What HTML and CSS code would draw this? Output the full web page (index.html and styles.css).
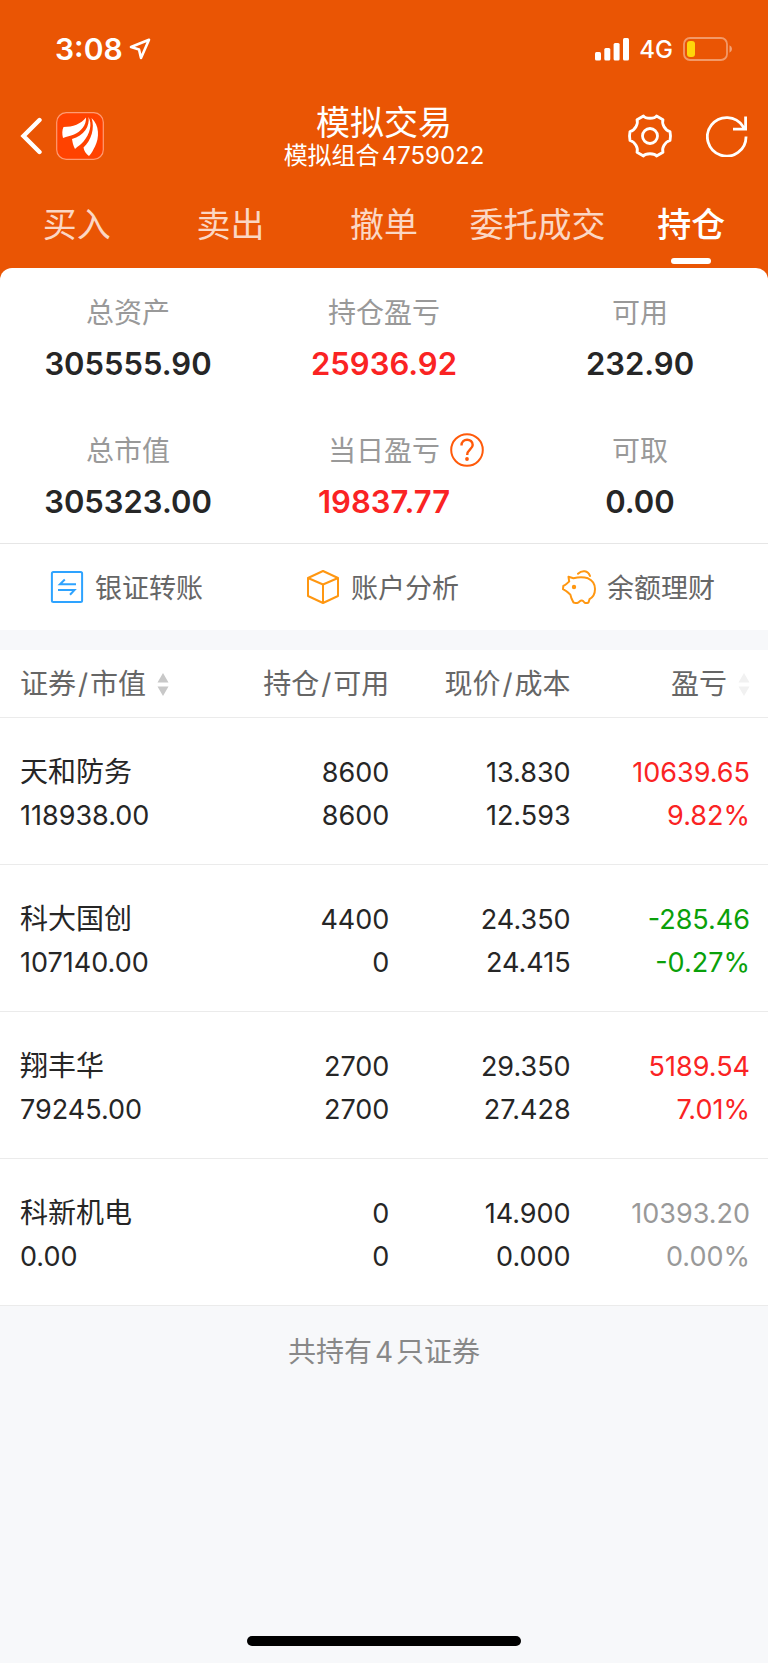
FILE: index.html
```html
<!DOCTYPE html>
<html lang="zh-CN">
<head>
<meta charset="utf-8">
<meta name="viewport" content="width=device-width, initial-scale=1">
<title>模拟交易</title>
<link rel="stylesheet" href="styles.css">
</head>
<body>
<div class="app">
  <header class="top">
    <div class="status">
      <div class="status-left">
        <span class="time">3:08</span>
        <svg width="22" height="22" viewBox="0 0 22 22" fill="none" stroke="#fff" stroke-width="2.600" stroke-linejoin="round"><path d="M20 1.800 2 9 10 11.500 12 20Z"/></svg>
      </div>
      <div class="status-right">
        <svg width="34" height="23" viewBox="0 0 34 23" fill="#fff"><rect x="0" y="14" width="6" height="8.500" rx="1.500"/><rect x="9.300" y="10" width="6" height="12.500" rx="1.500"/><rect x="18.600" y="5" width="6" height="17.500" rx="1.500"/><rect x="28" y="0" width="6" height="22.500" rx="1.500"/></svg>
        <span class="network">4G</span>
        <svg width="50" height="24" viewBox="0 0 50 24"><rect x="1" y="1" width="43" height="22" rx="6" fill="none" stroke="#fff" stroke-opacity=".4" stroke-width="1.800"/><rect x="4" y="4" width="8" height="16" rx="3" fill="#ffd60a"/><path d="M46.500 8.200q2.500 1.300 2.500 3.800t-2.500 3.800z" fill="#fff" fill-opacity=".45"/></svg>
      </div>
    </div>
    <div class="bar">
      <div class="bar-side">
        <button class="icon-btn" aria-label="返回"><svg width="22" height="38" viewBox="0 0 22 38" fill="none" stroke="#fff" stroke-width="4.400"><path d="M19.500 3 3.500 19 19.500 35" stroke-linecap="round"/></svg></button>
        <svg class="logo" width="48" height="48" viewBox="0 0 48 48"><rect x=".7" y=".7" width="46.600" height="46.600" rx="9.500" fill="#ff4200" stroke="#ff9b73" stroke-width="1.200"/><path fill="#fff" d="M30 5.500C25 12 17 15 7.500 15 6 18 6 22 7 26 11 24 14 24.500 18 22.500 25 19.500 30.500 13 30 5.500ZM32.500 5C34 14 28 24 16 27 16.500 30 17 33 19 37 22 34 24.500 33 27.500 29.500 34 22 36.500 12 32.500 5ZM35.500 6C39 16 35.500 28 27.500 35.500 28 39 30 42 33 44 36 41 37 38 39 34.500 43.500 26 43.500 13 35.500 6Z"/></svg>
      </div>
      <div class="heading">
        <h1 class="title">模拟交易</h1>
        <p class="subtitle">模拟组合<span class="account">4759022</span></p>
      </div>
      <div class="bar-side bar-right">
        <button class="icon-btn" aria-label="设置"><svg width="44" height="44" viewBox="0 0 44 44" fill="none" stroke="#fff" stroke-width="2.800" stroke-linejoin="round"><path d="M15.500 2C17.500 5 26.500 5 28.500 2L35 5.800C33.600 9.500 36.500 16 42 17.500L42.500 22 42 26.500C36.500 28 33.600 34.500 35 38.200L28.500 42C26.500 39 17.500 39 15.500 42L9 38.200C10.400 34.500 7.500 28 2 26.500L1.500 22 2 17.500C7.500 16 10.400 9.500 9 5.800Z"/><circle cx="22" cy="22" r="7.500"/></svg></button>
        <button class="icon-btn" aria-label="刷新"><svg width="42" height="42" viewBox="0 0 42 42" fill="none" stroke="#fff" stroke-width="2.800"><path d="M40 21.500A19.300 19.300 0 1 1 37 11.500L39 14.200M39.600 1.500V14.200H27"/></svg></button>
      </div>
    </div>
    <nav class="tabs">
      <a class="tab" href="#">买入</a>
      <a class="tab" href="#">卖出</a>
      <a class="tab" href="#">撤单</a>
      <a class="tab" href="#">委托成交</a>
      <a class="tab tab-active" href="#" aria-current="page">持仓</a>
    </nav>
  </header>

  <main>
    <div class="panel">
      <dl class="summary">
        <div class="stat"><dt class="label">总资产</dt><dd class="value">305555.90</dd></div>
        <div class="stat"><dt class="label">持仓盈亏</dt><dd class="value up">25936.92</dd></div>
        <div class="stat"><dt class="label">可用</dt><dd class="value">232.90</dd></div>
        <div class="stat"><dt class="label">总市值</dt><dd class="value">305323.00</dd></div>
        <div class="stat"><dt class="label">当日盈亏<button class="help" aria-label="说明"><svg width="34" height="34" viewBox="0 0 34 34" fill="none" stroke="#ff5a0a" stroke-width="2"><circle cx="17" cy="17" r="15.800"/><path d="M11.500 12.500C11.500 4.700 22.700 5 22.700 12 22.700 16 17.200 16.500 17.200 22" stroke-width="2.400"/><circle cx="17" cy="26" r="1.900" fill="#ff5a0a" stroke="none"/></svg></button></dt><dd class="value up">19837.77</dd></div>
        <div class="stat"><dt class="label">可取</dt><dd class="value">0.00</dd></div>
      </dl>
      <div class="actions">
        <button class="action"><svg width="34" height="34" viewBox="0 0 34 34" fill="none" stroke="#2ea3ff" stroke-width="2"><rect x="1.900" y="1.900" width="30.200" height="30.200" rx="1.500"/><path d="M26 14.200H10L14.800 9.500M8 20H24.500L20 24.800"/></svg>银证转账</button>
        <button class="action"><svg width="34" height="34" viewBox="0 0 34 34" fill="none" stroke="#ff9711" stroke-width="2" stroke-linejoin="round"><path d="M17 1 32 8V26L17 33 2 26V8ZM2 8 17 14.500 32 8M17 14.500V33"/></svg>账户分析</button>
        <button class="action"><svg width="34" height="34" viewBox="0 0 34 34" fill="none" stroke="#ff9711" stroke-width="2" stroke-linejoin="round" stroke-linecap="round"><path d="M6.500 6.800 11.500 8.200C16 7.200 21 6.800 26 8.300 31 10.500 33 14.500 33 19 33 24 30.500 27.500 27.500 29.200L26.500 32.500Q23.500 34 22 32 20 29.300 17.500 31.500 16 34 11.500 32.500L9.500 28.500 8.300 24.500C5.500 22.500 6.500 22 1 19.200L1.300 16C5 14.500 4.500 13.500 7.200 11.500ZM16 3.700C20-.2 26 .2 28 6"/><circle cx="12" cy="17" r="2.200" fill="#ff9711" stroke="none"/></svg>余额理财</button>
      </div>
    </div>

    <table class="holdings">
      <thead>
        <tr>
          <th scope="col"><button class="sort"><span>证券<span class="slash">/</span>市值</span><svg width="12" height="24" viewBox="0 0 12 24" fill="#c8c8c8"><path d="M6 1 11.500 10.500H.5ZM6 24 .5 14.500H11.500Z"/></svg></button></th>
          <th scope="col">持仓<span class="slash">/</span>可用</th>
          <th scope="col">现价<span class="slash">/</span>成本</th>
          <th scope="col"><button class="sort">盈亏<svg width="12" height="24" viewBox="0 0 12 24" fill="#f1f1f1"><path d="M6 1 11.500 10.500H.5ZM6 24 .5 14.500H11.500Z"/></svg></button></th>
        </tr>
      </thead>
      <tbody>
        <tr><td><span class="name">天和防务</span><br>118938.00</td><td>8600<br>8600</td><td>13.830<br>12.593</td><td class="up">10639.65<br>9.82%</td></tr>
        <tr><td><span class="name">科大国创</span><br>107140.00</td><td>4400<br>0</td><td>24.350<br>24.415</td><td class="down">-285.46<br>-0.27%</td></tr>
        <tr><td><span class="name">翔丰华</span><br>79245.00</td><td>2700<br>2700</td><td>29.350<br>27.428</td><td class="up">5189.54<br>7.01%</td></tr>
        <tr><td><span class="name">科新机电</span><br>0.00</td><td>0<br>0</td><td>14.900<br>0.000</td><td class="flat">10393.20<br>0.00%</td></tr>
      </tbody>
    </table>
    <p class="count">共持有<span class="number">4</span>只证券</p>
  </main>
  <div class="home"></div>
</div>
</body>
</html>
```
FILE: styles.css
```css
* { box-sizing: border-box; }
body {
  margin: 0;
  background: #f7f8fa;
  color: #262626;
  font-family: Inter, "Noto Sans CJK SC", sans-serif;
}
h1, p, dl, dd { margin: 0; }
button {
  padding: 0;
  border: 0;
  background: none;
  color: inherit;
  font: inherit;
}
svg { display: block; flex: none; }
.app {
  min-height: 100vh;
  display: flex;
  flex-direction: column;
}
main { flex: 1; }

.top {
  padding-bottom: 12px;
  background: #ea5504;
  color: #fff;
}
.status {
  display: flex;
  justify-content: space-between;
  align-items: center;
  height: 98px;
  padding: 0 35px 0 55px;
}
.status-left { display: flex; align-items: center; gap: 6px; }
.status-right { display: flex; align-items: center; gap: 10px; }
.time { font-size: 30px; font-weight: 600; }
.network { font-size: 24px; font-weight: 500; }
.bar {
  display: grid;
  grid-template-columns: 1fr auto 1fr;
  align-items: center;
  height: 76px;
  padding: 0 20px;
}
.bar-side { display: flex; align-items: center; gap: 14px; }
.bar-right { justify-content: flex-end; gap: 34px; }
.heading { padding-top: 2px; text-align: center; }
.title { font-size: 34px; line-height: 38px; font-weight: 400; }
.subtitle { font-size: 24px; line-height: 28px; }
.account { margin-left: 2px; }
.tabs {
  display: grid;
  grid-template-columns: repeat(5, 1fr);
  height: 94px;
}
.tab {
  position: relative;
  padding-top: 27px;
  color: #fbd7c4;
  font-size: 34px;
  line-height: 48px;
  text-align: center;
  text-decoration: none;
  white-space: nowrap;
}
.tab-active { color: #fff; font-weight: 500; }
.tab-active::after {
  content: "";
  position: absolute;
  bottom: 4px;
  left: 50%;
  width: 40px;
  height: 6px;
  margin-left: -20px;
  border-radius: 3px;
  background: #fff;
}

.panel {
  position: relative;
  margin-top: -12px;
  border-radius: 12px 12px 0 0;
  background: #fff;
}
.summary {
  display: grid;
  grid-template-columns: repeat(3, 1fr);
  row-gap: 42px;
  padding: 25px 0 16px;
  border-bottom: 1px solid #e6e6e6;
}
.stat {
  display: flex;
  flex-direction: column;
  align-items: center;
  gap: 6px;
}
.label {
  position: relative;
  color: #999;
  font-size: 28px;
  line-height: 40px;
}
.value { font-size: 31px; line-height: 50px; font-weight: 600; }
.help { position: absolute; top: 2px; left: 100%; margin-left: 10px; }
.actions {
  display: grid;
  grid-template-columns: repeat(3, 1fr);
  height: 86px;
}
.action {
  display: flex;
  align-items: center;
  justify-content: center;
  gap: 11px;
  padding: 0 3px 1px 0;
  color: #666;
  font-size: 27px;
}

.holdings {
  width: 100%;
  margin-top: 20px;
  border-collapse: collapse;
  table-layout: fixed;
  background: #fff;
  font-size: 27px;
  line-height: 43px;
  text-align: right;
}
.holdings th, .holdings td { padding: 0; border-bottom: 1px solid #ebebeb; }
.holdings th {
  width: 23.6%;
  height: 67px;
  padding-top: 2px;
  color: #666;
  font-size: 28px;
  font-weight: 400;
}
.holdings th:first-child { width: 27.1%; }
.holdings th:last-child { width: 25.7%; }
.holdings td { padding: 33px 0 27px; }
.holdings tr > :first-child { padding-left: 20px; text-align: left; }
.holdings tr > :last-child { padding-right: 18px; }
.name { font-size: 28px; line-height: 40px; }
.sort { display: inline-flex; align-items: center; gap: 11px; }
.slash { margin: 0 2px; }
.up { color: #fa2323; }
.holdings .down { color: #0aa00a; }
.holdings .flat { color: #999; }
.count {
  padding-top: 26px;
  color: #888;
  font-size: 28px;
  line-height: 40px;
  text-align: center;
}
.number { margin: 0 3px; }
.home {
  width: 274px;
  height: 10px;
  margin: 0 auto 17px;
  border-radius: 5px;
  background: #000;
}
```
